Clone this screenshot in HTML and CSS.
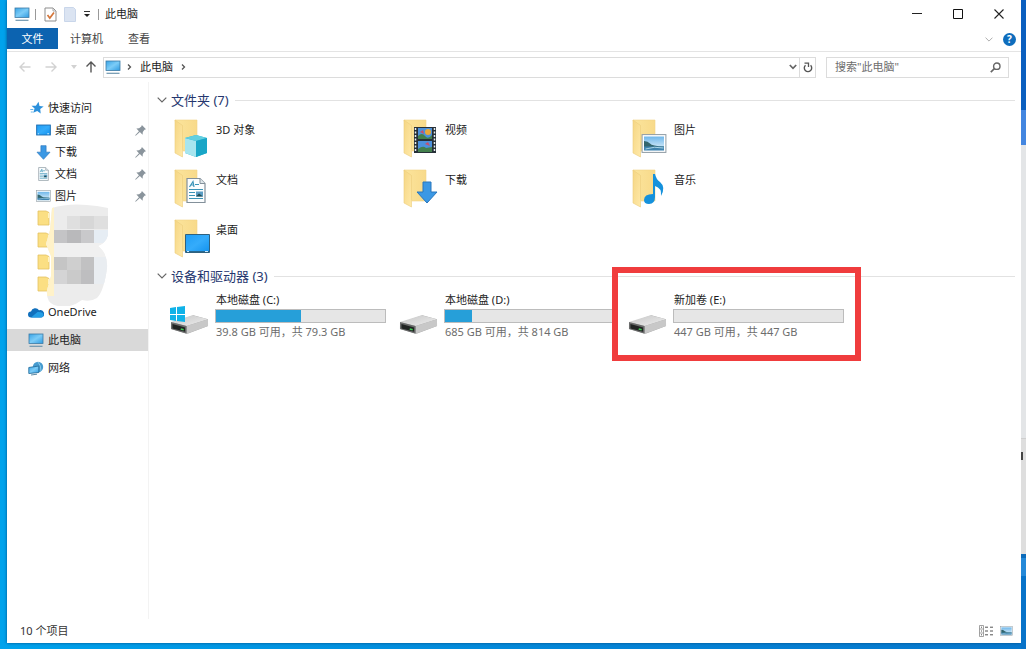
FILE: index.html
```html
<!DOCTYPE html>
<html lang="zh-CN">
<head>
<meta charset="utf-8">
<meta name="viewport" content="width=device-width, initial-scale=1">
<title>此电脑</title>
<link rel="stylesheet" href="styles.css">
</head>
<body>
<svg class="defs" aria-hidden="true">
  <defs>
    <linearGradient id="screen" x1="0" y1="0" x2="1" y2="1"><stop offset="0" stop-color="#39a4e6"/><stop offset=".5" stop-color="#7cccf7"/><stop offset="1" stop-color="#2e9ae0"/></linearGradient>
    <linearGradient id="desk" x1="0" y1="0" x2="1" y2="1"><stop offset="0" stop-color="#1f9df5"/><stop offset=".5" stop-color="#35acfb"/><stop offset="1" stop-color="#1191ee"/></linearGradient>
    <linearGradient id="fold" x1="0" y1="0" x2="1" y2="0"><stop offset="0" stop-color="#fbe49c"/><stop offset="1" stop-color="#f8da8a"/></linearGradient>
    <linearGradient id="flap" x1="0" y1="0" x2="1" y2="1"><stop offset="0" stop-color="#f5d684"/><stop offset="1" stop-color="#ffe9a8"/></linearGradient>
    <linearGradient id="disk" x1="0" y1="0" x2="1" y2="1"><stop offset="0" stop-color="#c6c6c6"/><stop offset="1" stop-color="#eeeeee"/></linearGradient>
    <linearGradient id="sky" x1="0" y1="0" x2="0" y2="1"><stop offset="0" stop-color="#6fb7ea"/><stop offset="1" stop-color="#e8f5fc"/></linearGradient>
    <symbol id="i-pc" viewBox="0 0 16 15"><rect x="1" y="1" width="14" height="9.500" fill="url(#screen)" stroke="#3d7ba5" stroke-width=".8"/><path d="M1.500 13.300h13" stroke="#6f96ae" stroke-width="1.200"/></symbol>
    <symbol id="i-desk" viewBox="0 0 16 12"><rect x=".7" y=".7" width="14.600" height="10.600" fill="url(#desk)" stroke="#1b6cb0"/><path d="M2 10h1M12 10h2" stroke="#d8efff"/></symbol>
    <symbol id="i-down" viewBox="0 0 22 23"><path d="M7 1h8v10h6L11 22 1 11h6z" fill="#3b98e4" stroke="#2876bd"/></symbol>
    <symbol id="i-doc" viewBox="0 0 20 26"><path d="M1 1h13l5 5v19H1z" fill="#fbfdfe" stroke="#83909a" stroke-width="1.200"/><path d="M14 1v5h5" fill="#dfe6ea" stroke="#83909a"/><path d="M3.500 9.500 7 4l1 5.500M5 7.500h3M9 7h4M3 12h14M3 15h6M3 18h6M3 21h14" fill="none" stroke="#3a94b8" stroke-width="1.200"/><path d="M10 14h7v5h-7z" fill="#5a9dc4"/><path d="m10 19 3-3 4 3z" fill="#234e56"/></symbol>
    <symbol id="i-pic" viewBox="0 0 25 19"><rect x=".6" y=".6" width="23.800" height="17.800" fill="#fff" stroke="#8e9ba4"/><path d="M2.500 2.500h20v14h-20z" fill="url(#sky)"/><path d="M2.500 7q4 0 6 2.500t14 3v1h-20z" fill="#33666d"/><path d="M2.500 12.500h20v4h-20z" fill="#3f83ae"/><path d="M4 15q9-3 18-1" stroke="#a7d4e6" fill="none"/></symbol>
    <symbol id="i-pin" viewBox="0 0 12 12"><path d="M7.500 0 12 4.500l-1.700.6L8.500 7.500l-.2 3L5.300 7.700.8 11.800.2 11.200l4.100-4.500L1.500 3.700l3-.2L6.900 1.700z" fill="#8a949c"/></symbol>
    <symbol id="i-fold" viewBox="0 0 13 16"><path d="M1 1h8l3 1.500V15H1z" fill="#fbdf83" stroke="#e4c263" stroke-width=".8"/><path d="M11 3v5h1.500V3z" fill="#fff2c2"/></symbol>
    <symbol id="i-folder" viewBox="0 0 24 40"><path d="M1 1h22v31H9z" fill="url(#fold)" stroke="#f1d488" stroke-width=".6"/><path d="M1 1 8.500 6.500V38L1 34z" fill="url(#flap)" stroke="#edcd7a" stroke-width=".6"/></symbol>
    <symbol id="i-drive" viewBox="0 0 40 22"><path d="M1 9 24 1l15 4v7L18 20 1 15z" fill="#a9a9a9"/><path d="M1 8 23 1l16 4-22 7z" fill="url(#disk)"/><path d="M17 12 39 5v7L17 20z" fill="#c8c8c8"/><path d="M1 8l16 4v8L1 15z" fill="#6b6c6c"/><path d="m2.500 10 13 3.500v4.500l-13-3.500z" fill="#202322"/><path d="m11 15 3 .8" stroke="#43cd58" stroke-width="1.600"/></symbol>
    <symbol id="i-chev" viewBox="0 0 10 6"><path d="m.7.7 4.300 4.300L9.300.7" fill="none" stroke="currentColor" stroke-width="1.200"/></symbol>
    <symbol id="i-next" viewBox="0 0 5 8"><path d="m1 1.500 2.500 2.500L1 6.500" fill="none" stroke="#555" stroke-width="1.300"/></symbol>
    <symbol id="i-arrow" viewBox="0 0 12 12"><path d="M11.500 6H1M5.500 1.500 1 6l4.500 4.500" fill="none" stroke="currentColor" stroke-width="1.400"/></symbol>
  </defs>
</svg>

<div class="desktop">
<div class="window">
  <header class="titlebar">
    <svg class="pc"><use href="#i-pc"/></svg>
    <span class="rule"></span>
    <button class="plain" aria-label="属性"><svg width="13" height="15" viewBox="0 0 13 15"><path d="M1 1h8l3 3v10H1z" fill="#fff" stroke="#8d8d8d"/><path d="M9 1v3h3" fill="none" stroke="#a9a9a9"/><path d="m3.500 8 2.300 3L10 5.500" fill="none" stroke="#d4763b" stroke-width="1.700"/></svg></button>
    <button class="plain" aria-label="新建文件夹"><svg width="12" height="15" viewBox="0 0 12 15"><path d="M.5.500h9l2 2v12H.5z" fill="#dbe4f2" stroke="#c9d6ea"/></svg></button>
    <button class="plain" aria-label="自定义快速访问工具栏"><svg width="8" height="8" viewBox="0 0 8 8"><path d="M1 1.500h6" stroke="#333"/><path d="M1 4h6L4 7z" fill="#222"/></svg></button>
    <span class="rule"></span>
    <h1 class="title">此电脑</h1>
    <div class="controls">
      <button class="control" aria-label="最小化"><svg width="10" height="10" viewBox="0 0 10 10"><path d="M0 4.500h10" stroke="#222"/></svg></button>
      <button class="control" aria-label="最大化"><svg width="10" height="10" viewBox="0 0 10 10"><path d="M.5.500h9v9h-9z" fill="none" stroke="#111"/></svg></button>
      <button class="control" aria-label="关闭"><svg width="10" height="10" viewBox="0 0 10 10"><path d="m.5.500 9 9m0-9-9 9" stroke="#222" stroke-width="1.100"/></svg></button>
    </div>
  </header>

  <div class="ribbon">
    <button class="tab file">文件</button>
    <button class="tab">计算机</button>
    <button class="tab">查看</button>
    <div class="ribbon-end">
      <button class="plain pale" aria-label="展开功能区"><svg width="8" height="5"><use href="#i-chev"/></svg></button>
      <button class="help" aria-label="帮助">?</button>
    </div>
  </div>

  <div class="address-row">
    <button class="plain nav-btn faint" aria-label="后退"><svg width="12" height="12"><use href="#i-arrow"/></svg></button>
    <button class="plain nav-btn faint" aria-label="前进"><svg class="right" width="12" height="12"><use href="#i-arrow"/></svg></button>
    <button class="plain recent faint" aria-label="最近位置"><svg width="6" height="4"><path d="M0 0h6L3 4z" fill="currentColor"/></svg></button>
    <button class="plain up" aria-label="上移"><svg class="upward" width="12" height="12"><use href="#i-arrow"/></svg></button>
    <div class="address">
      <svg class="pc"><use href="#i-pc"/></svg>
      <svg width="5" height="8"><use href="#i-next"/></svg>
      <button class="crumb">此电脑</button>
      <svg width="5" height="8"><use href="#i-next"/></svg>
      <button class="plain drop" aria-label="历史记录"><svg width="8" height="6" viewBox="0 0 8 6"><path d="m.8 1 3.200 3.300L7.200 1" fill="none" stroke="#666" stroke-width="1.700"/></svg></button>
      <button class="refresh" aria-label="刷新"><svg width="10" height="11" viewBox="0 0 10 11"><path d="M2.500 3.200A3.700 3.700 0 1 0 7.600 3.300" fill="none" stroke="#555" stroke-width="1.400"/><path d="M1.500 1.200h4V5" fill="none" stroke="#555" stroke-width="1.300"/></svg></button>
    </div>
    <div class="search">
      <input type="text" aria-label="搜索" placeholder="搜索&quot;此电脑&quot;">
      <svg width="11" height="11" viewBox="0 0 11 11"><circle cx="6.800" cy="4.200" r="3.200" fill="none" stroke="#666" stroke-width="1.400"/><path d="M4.500 6.500.8 10.200" stroke="#666" stroke-width="1.700"/></svg>
    </div>
  </div>

  <div class="body">
    <nav class="sidebar" aria-label="导航窗格">
      <ul class="tree">
        <li><a class="node" href="#quick"><svg width="14" height="14" viewBox="0 0 14 14"><path d="m8.500.8 1 4.100 4.200.7-3.500 2.500.5 4.300-3.500-2.500-4 1.900 1.400-4.300L1.500 4.800h4.400z" fill="#2c91dc"/><path d="M.3 8.500h3M.8 11h2" stroke="#65b5e9"/></svg>快速访问</a></li>
        <li><a class="node child" href="#desktop"><svg width="15" height="12"><use href="#i-desk"/></svg>桌面<svg class="pin"><use href="#i-pin"/></svg></a></li>
        <li><a class="node child" href="#downloads"><svg width="15" height="15"><use href="#i-down"/></svg>下载<svg class="pin"><use href="#i-pin"/></svg></a></li>
        <li><a class="node child" href="#documents"><svg width="15" height="14"><use href="#i-doc"/></svg>文档<svg class="pin"><use href="#i-pin"/></svg></a></li>
        <li><a class="node child" href="#pictures"><svg width="15" height="12"><use href="#i-pic"/></svg>图片<svg class="pin"><use href="#i-pin"/></svg></a></li>
        <li class="hidden-names">
          <a class="node child" href="#f1" aria-label="文件夹"><svg width="15" height="16"><use href="#i-fold"/></svg></a>
          <a class="node child" href="#f2" aria-label="文件夹"><svg width="15" height="16"><use href="#i-fold"/></svg></a>
          <a class="node child" href="#f3" aria-label="文件夹"><svg width="15" height="16"><use href="#i-fold"/></svg></a>
          <a class="node child" href="#f4" aria-label="文件夹"><svg width="15" height="16"><use href="#i-fold"/></svg></a>
          <svg class="mosaic" viewBox="0 0 64 102" aria-hidden="true">
            <clipPath id="blob"><path d="M7 4Q25-2 52 2L63 4V31Q61 39 53 42 63 50 62 64 59 87 52 94 46 98 37 96 24 106 9 101 1 98 2 86L6 72V52L1 40 5 26z"/></clipPath>
            <g clip-path="url(#blob)"><path d="M0 0h64v102H0z" fill="#ececec"/><path d="M0 0h9v92H0z" fill="#fff2c9"/><path d="M22 12h13v13H22zM49 12h14v13H49z" fill="#dfdfdf"/><path d="M35 12h14v13H35z" fill="#d7d7d7"/><path d="M9 26h13v13H9z" fill="#c4c4c6"/><path d="M22 26h14v13H22z" fill="#b9b9bb"/><path d="M36 26h13v13H36z" fill="#c9c9cb"/><path d="M49 26h14v13H49z" fill="#e6edf4"/><path d="M9 39h54v14H9z" fill="#f0f0f0"/><path d="M9 53h13v13H9z" fill="#c5c5c5"/><path d="M22 53h14v13H22z" fill="#cfcfcf"/><path d="M36 53h13v13H36z" fill="#c1c1c2"/><path d="M9 66h13v14H9z" fill="#d4d4d5"/><path d="M22 66h14v14H22z" fill="#cacaca"/><path d="M36 66h13v14H36z" fill="#bebec0"/><path d="M49 53h14v27H49z" fill="#e9edf1"/></g>
          </svg>
        </li>
      </ul>
      <a class="node" href="#onedrive"><svg width="16" height="11" viewBox="0 0 16 11"><path d="M3 10.500a3 3 0 0 1 0-6A4.500 4.500 0 0 1 11 3.200 3.700 3.700 0 0 1 13.500 10.500z" fill="#1170bd"/><path d="m3 10.500 6.500-5.500q6-.3 6 3 0 2.500-3 2.500z" fill="#249ee5"/></svg>OneDrive</a>
      <a class="node selected" href="#pc" aria-current="page"><svg class="pc"><use href="#i-pc"/></svg>此电脑</a>
      <a class="node" href="#network"><svg width="16" height="15" viewBox="0 0 16 15"><circle cx="10" cy="6" r="5.200" fill="#469bcf"/><path d="M10 1q3 3 3 9" stroke="#88c8e9" fill="none"/><path d="m.8 6.500 10-1.500v6.500l-10 1z" fill="url(#screen)" stroke="#28719f" stroke-width=".9"/><path d="M3 14l6-.8" stroke="#5f8ca6"/></svg>网络</a>
    </nav>

    <main class="content">
      <section>
        <h2 class="group"><svg width="10" height="6"><use href="#i-chev"/></svg>文件夹 (7)</h2>
        <ul class="items">
          <li class="item"><svg class="icon" viewBox="0 0 40 42"><use href="#i-folder" x="4" y="1" width="24" height="40"/><path d="m15 20 11-3 11 3v15l-11 4-11-4z" fill="#29b4d0"/><path d="m15 20 11 3v16l-11-4z" fill="#a7e5ef"/><path d="m15 20 11-3 11 3-11 3z" fill="#63cfe0"/><path d="M26 23l11-3v15l-11 4z" fill="#19a6c7"/></svg><span>3D 对象</span></li>
          <li class="item"><svg class="icon" viewBox="0 0 40 42"><use href="#i-folder" x="4" y="1" width="24" height="40"/><path d="M15 9h22v26H15z" fill="#263038"/><path d="M19 10h14v11H19zM19 23h14v11H19z" fill="#4c91dc"/><path d="M16.500 10v24M35.500 10v24" stroke="#e9eef0" stroke-width="1.500" stroke-dasharray="2 1.500"/><circle cx="29" cy="14" r="3" fill="#e7a93b"/><path d="M19 18q4-4 7 0t7-1v4H19zM19 31q5-4 8-1l6-1v5H19z" fill="#43804d"/><path d="m21 14 3-2 1 4zM26 26l3-2 2 4z" fill="#ca4f69"/></svg><span>视频</span></li>
          <li class="item"><svg class="icon" viewBox="0 0 40 42"><use href="#i-folder" x="4" y="1" width="24" height="40"/><use href="#i-pic" x="13" y="16" width="26" height="19"/></svg><span>图片</span></li>
          <li class="item"><svg class="icon" viewBox="0 0 40 42"><use href="#i-folder" x="4" y="1" width="24" height="40"/><use href="#i-doc" x="16" y="9" width="20" height="27"/></svg><span>文档</span></li>
          <li class="item"><svg class="icon" viewBox="0 0 40 42"><use href="#i-folder" x="4" y="1" width="24" height="40"/><use href="#i-down" x="17" y="13" width="22" height="23"/></svg><span>下载</span></li>
          <li class="item"><svg class="icon" viewBox="0 0 40 42"><use href="#i-folder" x="4" y="1" width="24" height="40"/><path d="M25 6h2q1 5 5 8 6 5 1 14 1-8-6-10v11q0 7-6 7-5 0-5-4 0-6 9-6z" fill="#1591dc"/></svg><span>音乐</span></li>
          <li class="item"><svg class="icon" viewBox="0 0 40 42"><use href="#i-folder" x="4" y="1" width="24" height="40"/><path d="M15.500 16.500h24v18h-24z" fill="url(#desk)" stroke="#30617e"/><path d="M16 33.500h23" stroke="#27688f"/><path d="M17 33.500h2M35 33.500h3" stroke="#c8e8ff"/></svg><span>桌面</span></li>
        </ul>
      </section>
      <section>
        <h2 class="group"><svg width="10" height="6"><use href="#i-chev"/></svg>设备和驱动器 (3)</h2>
        <ul class="items drives">
          <li class="item">
            <svg class="icon" viewBox="0 0 40 42"><use href="#i-drive" x="0" y="17" width="39" height="22"/><path d="m0 11 6-1v7H0zM7 10l8-1v8H7zM0 18h6v6l-6-1zM7 18h8v7l-8-1z" fill="#10b2e8"/></svg>
            <div class="drive"><span>本地磁盘 (C:)</span><div class="bar" role="progressbar" aria-label="C: 已用空间" aria-valuenow="50"><div class="used" style="width:50%"></div></div><span class="space">39.8 GB 可用，共 79.3 GB</span></div>
          </li>
          <li class="item">
            <svg class="icon" viewBox="0 0 40 42"><use href="#i-drive" x="0" y="17" width="39" height="22"/></svg>
            <div class="drive"><span>本地磁盘 (D:)</span><div class="bar" role="progressbar" aria-label="D: 已用空间" aria-valuenow="16"><div class="used" style="width:16%"></div></div><span class="space">685 GB 可用，共 814 GB</span></div>
          </li>
          <li class="item marked">
            <svg class="icon" viewBox="0 0 40 42"><use href="#i-drive" x="0" y="17" width="39" height="22"/></svg>
            <div class="drive"><span>新加卷 (E:)</span><div class="bar" role="progressbar" aria-label="E: 已用空间" aria-valuenow="0"><div class="used" style="width:0%"></div></div><span class="space">447 GB 可用，共 447 GB</span></div>
          </li>
        </ul>
      </section>
    </main>
  </div>

  <footer class="status">
    <span>10 个项目</span>
    <div class="views">
      <button class="plain" aria-label="详细信息"><svg width="15" height="12" viewBox="0 0 15 12"><path d="M.5.500h4v11h-4zM.5 4h4M.5 8h4" fill="none" stroke="#8b8b8b" stroke-width=".8"/><path d="M2 2.200h1M2 6h1M2 9.800h1M6 2.200h3M11 2.200h3M6 6h3M11 6h3M6 9.800h3M11 9.800h3" stroke="#555"/></svg></button>
      <button class="plain" aria-label="大图标"><svg width="13" height="10"><use href="#i-pic"/></svg></button>
    </div>
  </footer>
</div>
<div class="behind"><span class="mark"></span></div>
</div>
</body>
</html>
```
FILE: styles.css
```css
*, ::before, ::after { box-sizing: border-box; }
body {
  margin: 0;
  font: 11px/16px "Noto Sans", "Noto Sans CJK SC", sans-serif;
  color: #1c1c1c;
}
button, input { font: inherit; color: inherit; border: 0; padding: 0; background: none; }
ul { list-style: none; margin: 0; padding: 0; }
a { color: inherit; text-decoration: none; }
svg { display: block; flex: none; }
.defs { position: absolute; width: 0; height: 0; }
.pc { width: 16px; height: 15px; }
.plain { display: flex; align-items: center; justify-content: center; }

.desktop {
  display: grid;
  grid-template-columns: 1fr 5px;
  min-height: 100vh;
  padding-left: 7px;
  background: linear-gradient(90deg, #00a3ec, #0584d6 60%, #0878cd);
}
.window {
  display: flex;
  flex-direction: column;
  margin-bottom: 6px;
  background: #fff;
  box-shadow: 0 0 3px #00508a;
}
.behind {
  padding-top: 452px;
  background: linear-gradient(#0b5fbf 110px, #4386e0 110px 145px, #e3e5e7 145px 438px, #cfcfcf 438px 439px, #dedede 439px 554px, #0c6bba 554px 558px, #2589d8 558px 576px, #0873c9 576px);
}
.mark { display: block; width: 2px; height: 8px; background: #444; }

.titlebar { display: flex; align-items: center; height: 28px; padding: 0 2px 0 7px; gap: 7px; }
.rule { width: 1px; height: 11px; background: #999; }
.rule:first-of-type { margin: 0 1px 0 -2px; }
.title { margin: 0 0 0 -1px; font-size: 11px; font-weight: 400; }
.controls { display: flex; margin-left: auto; }
.control { display: flex; align-items: center; justify-content: center; width: 41px; height: 28px; }

.ribbon { display: flex; height: 24px; border-bottom: 1px solid #e4e4e4; }
.tab { height: 21px; padding: 0 12px; color: #444; }
.file { width: 51px; background: #0c63b0; color: #fff; }
.tab + .tab + .tab { margin-left: 1px; }
.ribbon-end { display: flex; align-items: center; gap: 10px; margin-left: auto; padding-right: 5px; }
.pale { color: #aaa; }
.help { width: 13px; height: 13px; border-radius: 50%; background: #0e6dbd; color: #fff; font-size: 10px; line-height: 13px; font-weight: 700; }

.address-row { display: flex; align-items: center; height: 30px; padding: 0 12px; }
.nav-btn { width: 26px; height: 20px; justify-content: flex-start; }
.faint { color: #d2d2d2; }
.recent { width: 10px; justify-content: flex-start; margin-right: 2px; }
.up { width: 20px; padding-right: 4px; color: #555; }
.right { transform: rotate(180deg); }
.upward { transform: rotate(90deg); }
.address { display: flex; flex: 1; align-items: center; gap: 7px; height: 21px; padding-left: 1px; border: 1px solid #dcdcdc; }
.address > .pc { margin-right: -1px; }
.crumb { padding: 0 1px; }
.drop { margin-left: auto; }
.refresh { display: flex; align-items: center; justify-content: center; width: 16px; height: 19px; margin-left: -5px; border-left: 1px solid #dcdcdc; }
.search { display: flex; align-items: center; width: 183px; height: 21px; margin-left: 10px; padding: 0 7px 0 8px; border: 1px solid #dcdcdc; }
.search input { flex: 1; min-width: 0; outline: 0; }
.search input::placeholder { color: #6d6d6d; opacity: 1; }

.body { display: flex; flex: 1; }
.sidebar { display: flex; flex-direction: column; gap: 6px; width: 142px; padding-top: 15px; border-right: 1px solid #f3f3f3; }
.node { display: flex; align-items: center; gap: 4px; height: 22px; padding-left: 21px; }
.tree > li:first-child .node { padding-left: 23px; }
.tree .child { padding-left: 29px; }
.pin { width: 11px; height: 11px; margin: 0 2px 0 auto; }
.selected { background: #d9d9d9; }
.hidden-names { position: relative; }
.mosaic { position: absolute; left: 38px; top: -3px; width: 64px; height: 102px; }

.content { flex: 1; padding: 8px 6px 0 8px; }
.group { display: flex; align-items: center; gap: 4px; height: 20px; margin: 0; font-size: 13px; font-weight: 400; color: #25366e; }
.group svg { color: #666; }
.group::after { content: ""; flex: 1; height: 1px; margin-left: 2px; background: #e2e2e2; }
.items { display: grid; grid-template-columns: repeat(auto-fill, 229px); grid-auto-rows: 50px; margin: 6px 0 0 13px; }
.item { position: relative; display: flex; gap: 5px; }
.item > span { padding: 6px 0 0 1px; }
.icon { width: 40px; height: 42px; margin-top: 2px; }
.drives { margin-top: 5px; }
.drives .icon { margin-top: 6px; }
.drive { width: 171px; }
.drive span { display: block; padding-left: 1px; white-space: nowrap; line-height: 18px; }
.drive .space { color: #6d6d6d; }
.bar { height: 14px; border: 1px solid #bcbcbc; background: #e6e6e6; }
.used { height: 12px; background: #269fd9; }
.marked::after { content: ""; position: absolute; left: -16px; top: -24px; width: 249px; height: 94px; border: 6px solid #f03c3d; }

.status { display: flex; align-items: center; height: 24px; padding: 0 8px 0 13px; color: #333; }
.views { display: flex; align-items: center; gap: 6px; margin-left: auto; }
```
